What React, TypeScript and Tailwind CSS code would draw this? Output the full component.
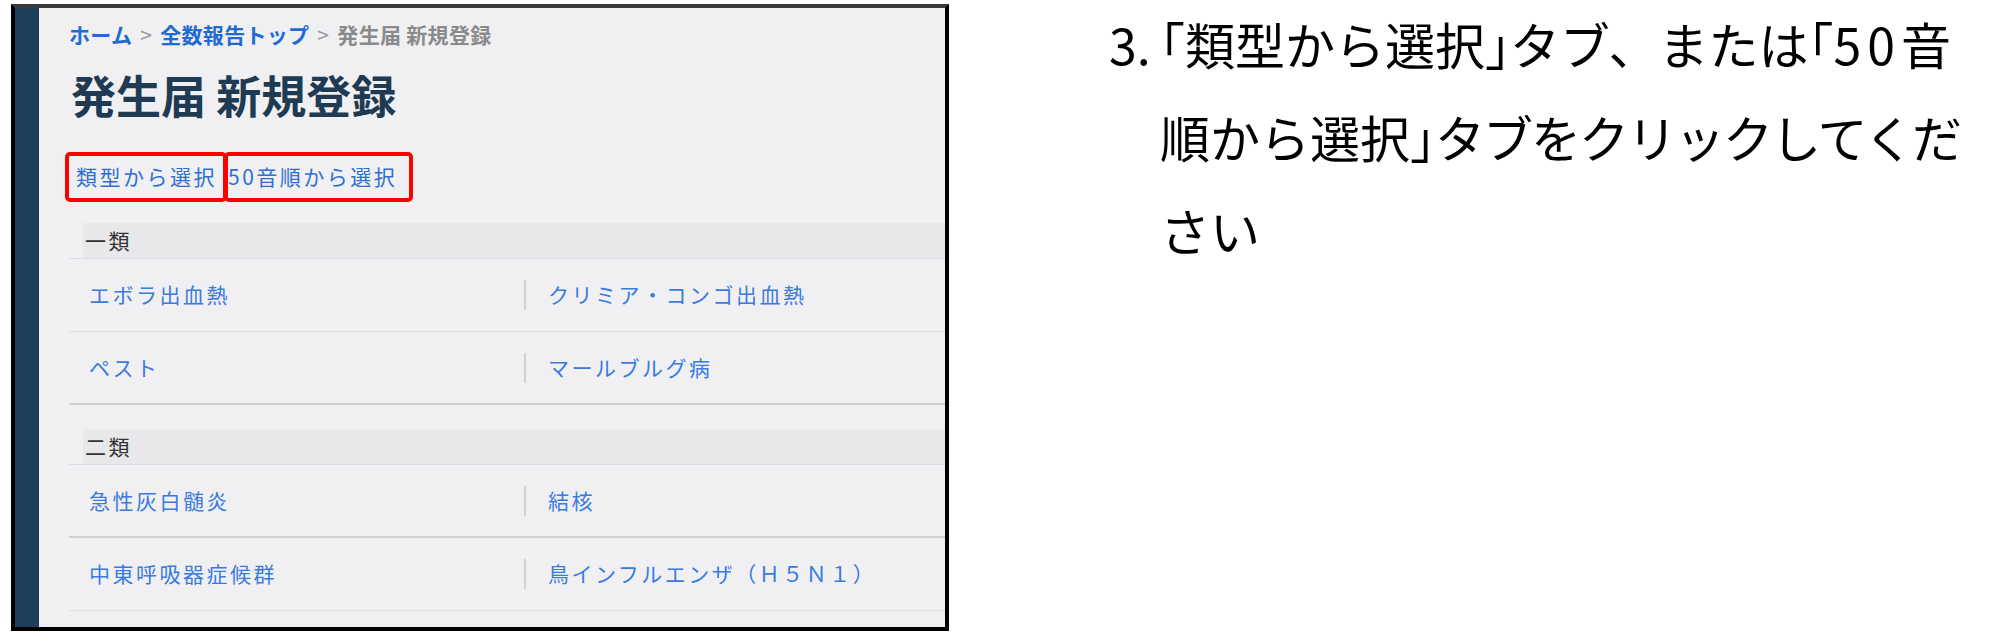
import React from 'react';

interface DiseaseRow {
  left: string;
  right: string;
  heavy?: boolean;
}

interface Section {
  title: string;
  rows: DiseaseRow[];
}

const sections: Section[] = [
  {
    title: '一類',
    rows: [
      { left: 'エボラ出血熱', right: 'クリミア・コンゴ出血熱' },
      { left: 'ペスト', right: 'マールブルグ病', heavy: true },
    ],
  },
  {
    title: '二類',
    rows: [
      { left: '急性灰白髄炎', right: '結核', heavy: true },
      { left: '中東呼吸器症候群', right: '鳥インフルエンザ（Ｈ５Ｎ１）' },
    ],
  },
];

const jp = "font-['Noto_Sans_CJK_JP','Noto_Sans',sans-serif]";

// half-width bracket, as Word compresses them
const Br: React.FC<{ children: React.ReactNode }> = ({ children }) => (
  <span className="[font-feature-settings:'halt']">{children}</span>
);

const DiseaseTable: React.FC<{ section: Section; first?: boolean }> = ({ section, first }) => (
  <div className={first ? '' : 'mt-[24px]'}>
    <div className="border-b border-[#d9dde3]">
      <div className="ml-[14px] h-[35px] bg-[#e8e8eb] pl-[2px] text-[21px] leading-[35px] tracking-[2.5px] text-[#333]">
        {section.title}
      </div>
    </div>
    {section.rows.map(row => (
      <div
        key={row.left}
        className={
          row.heavy
            ? 'flex h-[73px] items-center border-b-2 border-[#d0d0d0]'
            : 'flex h-[73px] items-center border-b border-[#dedede]'
        }
      >
        <div className="w-[455px] shrink-0 pl-[20px] text-[21px] tracking-[2.5px] text-[#3a7be0]">{row.left}</div>
        <div className="h-[30px] w-[2px] shrink-0 bg-[#d2d2d2]" />
        <div className="pl-[22px] text-[21px] tracking-[2.5px] whitespace-nowrap text-[#3a7be0]">{row.right}</div>
      </div>
    ))}
  </div>
);

const App: React.FC = () => {
  return (
    <div className={`flex h-[642px] w-[2000px] bg-white ${jp}`}>
      {/* screen capture of the registration page */}
      <div className="ml-[11px] mt-[4px] flex h-[627px] w-[938px] shrink-0 border-4 border-black border-t-[#3a3a3a]">
        <div className="w-[24px] shrink-0 bg-[#1e3f5b]" />
        <div className="flex-1 overflow-hidden bg-[#f0f0f3] pl-[30px]">
          <div className="mt-[13px] flex h-[28px] items-center whitespace-nowrap text-[21px] font-bold tracking-[0.3px]">
            <a className="text-[#1f6bd1]">ホーム</a>
            <span className="px-[8px] font-normal text-[#9a9a9a]">&gt;</span>
            <a className="text-[#1f6bd1]">全数報告トップ</a>
            <span className="px-[8px] font-normal text-[#9a9a9a]">&gt;</span>
            <span className="text-[#8a8a8a]">発生届 新規登録</span>
          </div>

          <h1 className="mt-[18px] h-[56px] pl-[2px] text-[45px] font-bold leading-[56px] text-[#1f3a53]">
            発生届 新規登録
          </h1>

          <div className="relative mt-[29px] flex h-[50px] items-center gap-[11px] text-[21px] tracking-[2.5px] text-[#2f6fd0]">
            <a className="ml-[7px]">類型から選択</a>
            <a>50音順から選択</a>
            <div className="absolute left-[-4px] top-0 h-[50px] w-[162px] rounded-[5px] border-4 border-[#ff0000]" />
            <div className="absolute left-[155px] top-0 h-[50px] w-[189px] rounded-[5px] border-4 border-[#ff0000]" />
          </div>

          <div className="mt-[21px]">
            {sections.map((s, i) => (
              <DiseaseTable key={s.title} section={s} first={i === 0} />
            ))}
          </div>
        </div>
      </div>

      {/* step instruction */}
      <div className="ml-[160px] -mt-[3px] flex text-[50px] leading-[93px] whitespace-nowrap text-black">
        <span className="w-[51px] shrink-0">3.</span>
        <p>
          <Br>「</Br>類型から選択<Br>」</Br>タブ、または<Br>「</Br>
          <span className="tracking-[6px]">50</span>音
          <br />
          順から選択<Br>」</Br>
          <span className="tracking-[-2px]">タブをクリックしてくだ</span>
          <br />
          さい
        </p>
      </div>
    </div>
  );
};

export default App;
